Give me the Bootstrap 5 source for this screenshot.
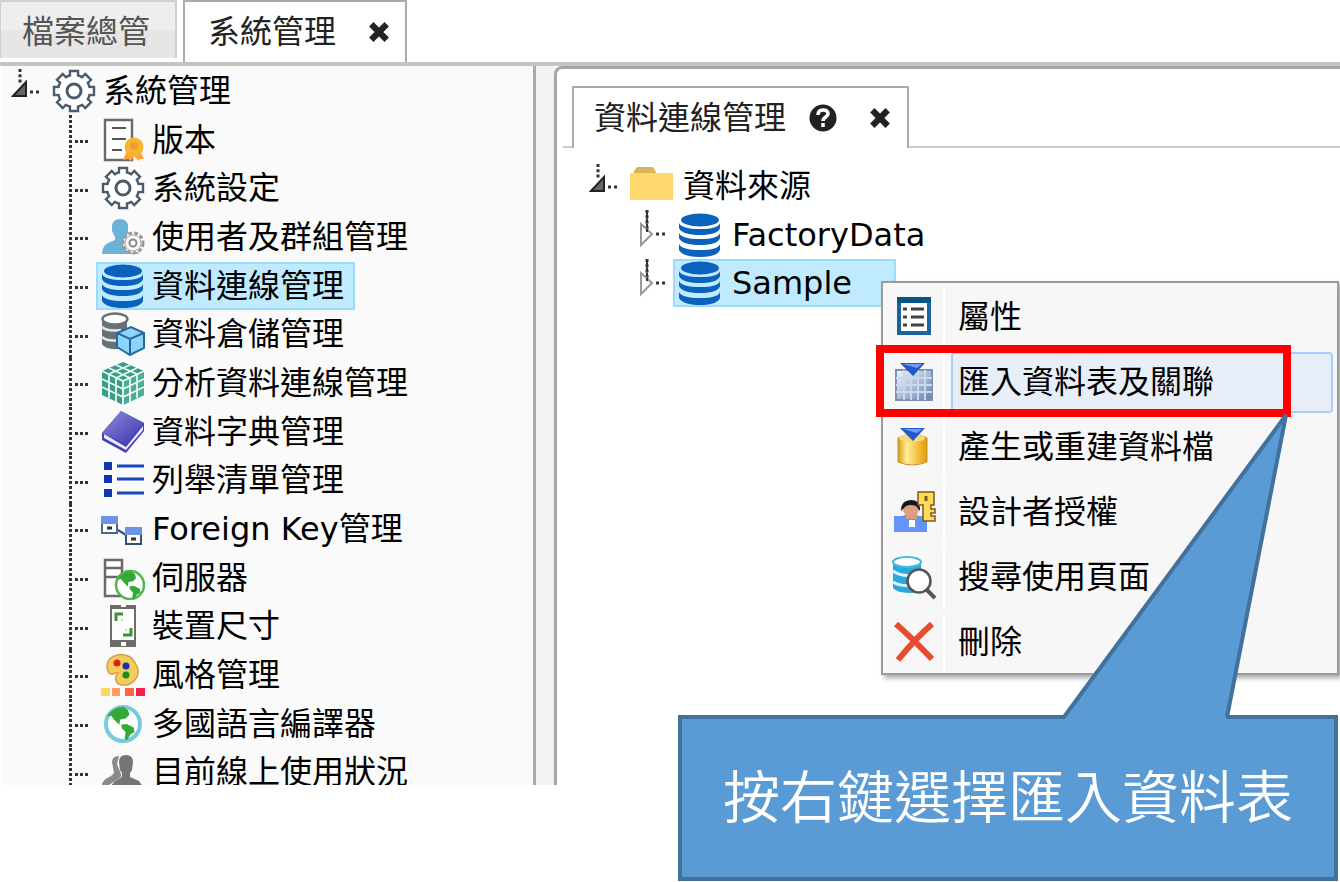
<!DOCTYPE html>
<html lang="zh-Hant">
<head>
<meta charset="utf-8">
<meta name="viewport" content="width=device-width, initial-scale=1">
<title>系統管理</title>
<link href="https://cdn.jsdelivr.net/npm/bootstrap@5.3.0/dist/css/bootstrap.min.css" rel="stylesheet">
<style>
body{font-family:"DejaVu Sans","Noto Sans CJK TC",sans-serif;font-size:32px;line-height:48px;color:#000;background:#fff;overflow:hidden}
a,button{color:inherit;text-decoration:none}
svg{display:block;flex:none}
.app{height:100vh;padding-bottom:97px}
.top-tabs{height:66px;border-bottom:4px solid #c4c4c4;gap:6px}
.top-tab{font-size:32px;line-height:48px;border:2px solid #ababab;border-bottom:0;background:#fff;color:#222;height:62px;padding:0 12px 0 23px;gap:29px}
.top-tab.idle{height:58px;color:#555;border-color:#d0d0d0;border-left:1px solid #d0d0d0;background:linear-gradient(#eee 0 48%,#e6e6e6 52%);padding:4px 25px 0 21px}
.close-x{border:0;background:none;padding:3px}
.side{width:536px;border-left:2px solid #fff;border-right:3px solid #aaa;background:#fafafa;overflow:hidden}
.split{width:18px;background:#f2f2f2}
.content{border:3px solid #a6a6a6;border-right:0;border-bottom:0;border-top-left-radius:8px;background:#fff}
.inner-tabs{padding:17px 0 0 6px}
.inner-tabs::before{content:"";width:9px;border-bottom:2px solid #ccc}
.inner-tabs::after{content:"";flex:1;border-bottom:2px solid #ccc}
.inner-tab{height:62px;border:2px solid #ababab;border-bottom:0;color:#222;padding:0 13px 0 20px}
.help{margin:0 26px 0 20px}
.tree{list-style:none;margin:0;padding:0}
.tree li{height:49px;display:flex;align-items:center;position:relative}
.tree li:nth-child(3n){height:48px}
.node{display:flex;align-items:center;gap:7px;height:48px;border:2px solid transparent;padding:0 9px 0 3px;white-space:nowrap}
.node.active{background:#bfeaff;border-color:#99dcfb}
.node svg{width:44px;height:44px}
.branch{width:94px;height:100%;flex:none;
 background:repeating-linear-gradient(90deg,#333 0 3px,transparent 3px 5px) 73px 25px/14px 3px no-repeat,
 repeating-linear-gradient(#333 0 3px,transparent 3px 5px) 67px 0/3px 100% no-repeat}
.caret-col{width:45px;height:100%;flex:none;padding-left:9px}
.content .caret-col{width:67px;padding-left:32px}
.content .tree{padding-top:13px}
.leaf-col{width:116px;height:100%;flex:none;padding-left:82px}
.content .node{gap:10px}
.sample{padding-right:42px}
.ctx{left:324px;top:22px;width:458px;z-index:2;border:2px solid #9b9b9b;background:#f7f7f7;box-shadow:3px 3px 5px rgba(0,0,0,.35)}
.ctx-item{height:65px;width:100%;border:0;background:none;padding:4px 4px 0 0;display:flex;text-align:left}
.ctx-icon{width:62px;padding-left:9px;border-right:2px solid #fff;display:flex;align-items:center}
.ctx-label{flex:1;margin-left:6px;padding:4px 0 0 5px;border:2px solid transparent;border-radius:4px;color:#000}
.ctx-item.hover .ctx-label{background:#e8eef7;border-color:#a9cdf8}
.frame-red{left:319px;top:86px;width:415px;height:72px;border:8px solid #f00;z-index:3}
.callout{left:121px;top:152px;width:660px;z-index:4}
.callout svg{width:100%;height:470px}
.callout-text{left:0;right:0;bottom:0;height:166px;color:#fff;font:350 57px/156px "Noto Sans CJK TC",sans-serif;text-align:center;white-space:nowrap}
</style>
</head>
<body>
<svg width="0" height="0" class="position-absolute" aria-hidden="true">
<symbol id="gear" viewBox="0 0 44 44">
<g id="teeth" fill="#fff" stroke="#4b5b6b" stroke-width="2.4"><path id="tooth" d="M18 2h8v8h-8z"/><use href="#tooth" transform="rotate(45 22 22)"/><use href="#tooth" transform="rotate(90 22 22)"/><use href="#tooth" transform="rotate(135 22 22)"/><use href="#tooth" transform="rotate(180 22 22)"/><use href="#tooth" transform="rotate(225 22 22)"/><use href="#tooth" transform="rotate(270 22 22)"/><use href="#tooth" transform="rotate(315 22 22)"/><circle cx="22" cy="22" r="16"/></g>
<g fill="#fff"><path id="gap" d="M19.200 4h5.600v7h-5.600z"/><use href="#gap" transform="rotate(45 22 22)"/><use href="#gap" transform="rotate(90 22 22)"/><use href="#gap" transform="rotate(135 22 22)"/><use href="#gap" transform="rotate(180 22 22)"/><use href="#gap" transform="rotate(225 22 22)"/><use href="#gap" transform="rotate(270 22 22)"/><use href="#gap" transform="rotate(315 22 22)"/></g>
<circle cx="22" cy="22" r="7" fill="#fff" stroke="#4b5b6b" stroke-width="3"/></symbol>
<symbol id="db" viewBox="0 0 44 44"><g fill="#0a62bd"><ellipse cx="22" cy="7" rx="19" ry="6.5"/><path d="M1 10q3 6 21 6t20-6v5q-2 7-20 7T1 15zM1 20q3 6 21 6t20-6v5q-2 7-20 7T1 25zM1 31q3 6 21 6t20-6v6q-3 7-20 7T1 37z"/></g></symbol>
<symbol id="xmark" viewBox="0 0 20 20"><path d="M3 3l14 14M17 3L3 17" stroke="#222" stroke-width="5.6"/></symbol>
<symbol id="opened" viewBox="0 0 28 48"><path d="M9 3v14" stroke="#333" stroke-width="3" stroke-dasharray="3 2.3"/><path d="M2 30L15 16v14z" fill="#666" stroke="#222" stroke-width="2"/><path d="M19 26h3m3 0h3" stroke="#333" stroke-width="3"/></symbol>
<symbol id="closed" viewBox="0 0 28 48"><path d="M8 0v24" stroke="#333" stroke-width="3" stroke-dasharray="3 2.3"/><path d="M2 14v21l11-11z" fill="#fff" stroke="#999" stroke-width="2"/><path d="M8 3v20" stroke="#333" stroke-width="2" stroke-dasharray="3 2.3"/><path d="M17 24h3m3 0h3" stroke="#333" stroke-width="3"/></symbol>
<symbol id="land" viewBox="0 0 40 40"><path d="M3 13Q10 2 22 2l5 4 1 5-4 4-6 1-1 6-6-6-3-4zM19 22l6-1 8 4 1 5-5 3-3 6-3-1 1-8-4-4z" fill="#35a935"/></symbol>
</svg>
<div class="app d-flex flex-column">
<header class="top-tabs d-flex align-items-start flex-shrink-0">
<button type="button" class="top-tab idle">檔案總管</button>
<div class="top-tab d-flex align-items-center"><a href="#">系統管理</a><button type="button" class="close-x" aria-label="關閉"><svg width="22" height="22"><use href="#xmark"/></svg></button></div>
</header>
<main class="d-flex flex-fill" style="min-height:0">
<nav class="side flex-shrink-0" aria-label="系統管理">
<ul class="tree">
<li><span class="caret-col"><svg width="28" height="48"><use href="#opened"/></svg></span><a href="#" class="node"><svg><use href="#gear"/></svg>系統管理</a></li>
<li><span class="branch"></span><a href="#" class="node"><svg viewBox="0 0 44 44"><path d="M4 2h27v40H4z" fill="#fff" stroke="#6a6a6a" stroke-width="2.4"/><path d="M11 10h14M11 21h14M11 32h10" stroke="#555" stroke-width="2"/><path d="M26 32l-4 10 5-1 3 2 3-5 5 5 1-2 4 0-5-10z" fill="#ffa23a"/><circle cx="33" cy="29" r="9.5" fill="#f5b52c"/><circle cx="33" cy="28" r="4" fill="#f09a38"/></svg>版本</a></li>
<li><span class="branch"></span><a href="#" class="node"><svg><use href="#gear"/></svg>系統設定</a></li>
<li><span class="branch"></span><a href="#" class="node"><svg viewBox="0 0 44 44"><path d="M11 12q0-8 8-8t8 8v6l-3 6v4l8 4 6 7H1q0-8 6-11l7-3v-3l-3-6z" fill="#6cb2d6"/><circle cx="32" cy="28" r="10" fill="#fff" stroke="#999" stroke-width="3" stroke-dasharray="4 2"/><circle cx="32" cy="28" r="8" fill="#fafafa" stroke="#aaa"/><circle cx="32" cy="28" r="3.5" fill="none" stroke="#888" stroke-width="2"/></svg>使用者及群組管理</a></li>
<li><span class="branch"></span><a href="#" class="node active" aria-current="page"><svg><use href="#db"/></svg>資料連線管理</a></li>
<li><span class="branch"></span><a href="#" class="node"><svg viewBox="0 0 44 44"><path d="M1 7v25q3 6 17 5l8-6V7z" fill="#687276"/><path d="M1 15q6 5 19 3M1 25q6 5 17 3" stroke="#e4e8ea" stroke-width="2.5" fill="none"/><ellipse cx="14" cy="7" rx="12.500" ry="5.500" fill="#fff" stroke="#687276" stroke-width="2.400"/><path d="M16 21l14-6 13 6v15L29 43l-13-8z" fill="#8dd3fb" stroke="#246a9d" stroke-width="2"/><path d="M16 21l13 6 14-6M29 27v16" stroke="#246a9d" stroke-width="2" fill="none"/></svg>資料倉儲管理</a></li>
<li><span class="branch"></span><a href="#" class="node"><svg viewBox="0 0 44 44"><path d="M22 1l21 9v24L22 44 1 34V10z" fill="#3b9c87"/><path d="M22 20l21-10v24L22 44z" fill="#4fab95"/><path d="M1 10l21 10 21-10M22 20v24M8 13v24M15 17v24M29 17v24M36 13v24M8 7l21 10M15 4l21 9M36 7L15 17M29 4L8 13M1 18l21 10 21-10M1 26l21 10 21-10" stroke="#e9fbf5" stroke-width="1.800" fill="none"/></svg>分析資料連線管理</a></li>
<li><span class="branch"></span><a href="#" class="node"><svg viewBox="0 0 44 44"><defs><linearGradient id="bk" x2="1" y2="1"><stop stop-color="#8f8de0"/><stop offset="1" stop-color="#3a32a8"/></linearGradient></defs><path d="M20 1l23 12v8L25 43 1 30v-7z" fill="#4340b8"/><path d="M3 24l22 13 17-21v4L25 40 3 28z" fill="#eceafc"/><path d="M20 1l23 12-18 21L1 23z" fill="url(#bk)"/></svg>資料字典管理</a></li>
<li><span class="branch"></span><a href="#" class="node"><svg viewBox="0 0 44 44"><path d="M3 4h8v8H3zM3 17h8v8H3zM3 31h8v8H3z" fill="#0d36b0"/><path d="M16 8h27M16 21h27M16 35h27" stroke="#1748bd" stroke-width="3.200"/></svg>列舉清單管理</a></li>
<li><span class="branch"></span><a href="#" class="node"><svg viewBox="0 0 44 44"><path d="M15 22l12 7" stroke="#345c87" stroke-width="2.500"/><path d="M1 10h15v16H1z" fill="#fff" stroke="#49698e" stroke-width="2"/><path d="M0 9h17v8H0z" fill="#6c94e5"/><path d="M25 21h15v16H25z" fill="#fff" stroke="#344f70" stroke-width="2"/><path d="M24 20h17v8H24z" fill="#6c94e5"/><path d="M6 21h5M30 32h5" stroke="#334" stroke-width="3"/></svg>Foreign Key管理</a></li>
<li><span class="branch"></span><a href="#" class="node"><svg viewBox="0 0 44 44"><path d="M4 4h17v36H4zM4 12h17M4 21h17" fill="#fff" stroke="#6a6a6a" stroke-width="2.500"/><circle cx="29" cy="29" r="14" fill="#fff" stroke="#4fb84f" stroke-width="2.500"/><use href="#land" x="14" y="14" width="30" height="30"/></svg>伺服器</a></li>
<li><span class="branch"></span><a href="#" class="node"><svg viewBox="0 0 44 44"><path d="M9 1h26v42H9z" fill="#6c6c6c"/><path d="M11 5h22v31H11zM20 1h5v2h-5zM20 38h5v4h-5z" fill="#fff"/><path d="M15 17v-7h7M30 24v7h-8" stroke="#3b9336" stroke-width="3" fill="none"/><path d="M20 15l2 2M24 25l2 2" stroke="#83bd7f" stroke-width="1"/></svg>裝置尺寸</a></li>
<li><span class="branch"></span><a href="#" class="node"><svg viewBox="0 0 44 44"><path d="M6 15C5 4 17-1 27 3c7 3 8 9 10 13 1 9-6 17-15 16-8 0-9-8-5-12-3-1-6 3-9 0z" fill="#f3cc5c" stroke="#d2a146" stroke-width="1.500"/><circle cx="16" cy="10" r="3.500" fill="#e02010"/><circle cx="25" cy="13" r="3.500" fill="#1235b8"/><circle cx="25" cy="22" r="3.500" fill="#169116"/><path d="M0 35h9v8H0z" fill="#ffd65e"/><path d="M11 35h8v8h-8z" fill="#ff9c66"/><path d="M24 35h9v8h-9z" fill="#ff6547"/><path d="M35 35h9v8h-9z" fill="#f92149"/></svg>風格管理</a></li>
<li><span class="branch"></span><a href="#" class="node"><svg viewBox="0 0 44 44"><circle cx="22" cy="22" r="17" fill="#fff" stroke="#75cce1" stroke-width="4"/><use href="#land" x="3" y="3" width="36" height="36"/></svg>多國語言編譯器</a></li>
<li><span class="branch"></span><a href="#" class="node"><svg viewBox="0 0 44 44"><path d="M11 12q0-6 7-6l-2 8 4 10 0 3-12 8H1q0-5 9-9l3-3z" fill="#8a8a8a"/><path d="M18 12q0-7 7-7t7 7l-1 8-2 3v4l9 4 4 6v7H9v-7l5-6 7-4v-4l-2-3z" fill="#757575"/></svg>目前線上使用狀況</a></li>
</ul>
</nav>
<div class="split flex-shrink-0"></div>
<section class="content flex-fill">
<div class="inner-tabs d-flex"><div class="inner-tab d-flex align-items-center"><a href="#">資料連線管理</a><button type="button" class="close-x help" aria-label="說明"><svg viewBox="0 0 28 28" width="28" height="28"><circle cx="14" cy="14" r="13.500" fill="#222"/><path d="M9 11q0-5 5-5t5 4c0 3-5 3-5 7M14 19v4" stroke="#fff" stroke-width="3.500" fill="none"/></svg></button><button type="button" class="close-x" aria-label="關閉"><svg width="22" height="22"><use href="#xmark"/></svg></button></div></div>
<ul class="tree">
<li><span class="caret-col"><svg width="28" height="48"><use href="#opened"/></svg></span><a href="#" class="node"><svg viewBox="0 0 44 44"><path d="M5 7l3-4h16l3 5v4H5z" fill="#d9b457"/><path d="M1 9h43v27H1z" fill="#ffd970"/></svg>資料來源</a></li>
<li><span class="leaf-col"><svg width="28" height="48"><use href="#closed"/></svg></span><a href="#" class="node"><svg><use href="#db"/></svg>FactoryData</a></li>
<li><span class="leaf-col"><svg width="28" height="48"><use href="#closed"/></svg></span><a href="#" class="node active sample"><svg><use href="#db"/></svg>Sample</a>
<div class="ctx position-absolute" role="menu">
<button type="button" class="ctx-item" role="menuitem"><span class="ctx-icon"><svg viewBox="0 0 44 44" width="44" height="44"><path d="M7 4h30v33H7z" fill="#fff" stroke="#1c6597" stroke-width="4"/><path d="M5 1h34v6H5z" fill="#075585"/><path d="M11 13h4m4 0h13M11 21h4m4 0h13M11 29h4m4 0h13" stroke="#444" stroke-width="3"/></svg></span><span class="ctx-label">屬性</span></button>
<button type="button" class="ctx-item hover" role="menuitem"><span class="ctx-icon"><svg viewBox="0 0 44 44" width="44" height="44"><defs><linearGradient id="tb" x2="1" y2="1"><stop stop-color="#f3f8ff"/><stop offset="1" stop-color="#6982ad"/></linearGradient></defs><path d="M4 9h36v30H4z" fill="url(#tb)" stroke="#7c90b5" stroke-width="2"/><path d="M4 17h36M4 24h36M4 31h36M12 9v30M19 9v30M26 9v30M33 9v30" stroke="#cad8ef" stroke-width="2"/><path d="M8 2h25L21 15z" fill="#2459c9"/><path d="M11 3h19l-5 4z" fill="#729cf0"/></svg></span><span class="ctx-label">匯入資料表及關聯</span></button>
<button type="button" class="ctx-item" role="menuitem"><span class="ctx-icon"><svg viewBox="0 0 44 44" width="44" height="44"><defs><linearGradient id="gd"><stop stop-color="#d99c12"/><stop offset=".3" stop-color="#ffef94"/><stop offset="1" stop-color="#e69a00"/></linearGradient></defs><path d="M6 12v24q14 6 29 0V12q-14-8-29 0z" fill="url(#gd)" stroke="#c19236"/><ellipse cx="20" cy="12" rx="13" ry="4" fill="#f6dc79"/><path d="M8 2h25L21 15z" fill="#2459c9"/><path d="M11 3h19l-5 4z" fill="#729cf0"/></svg></span><span class="ctx-label">產生或重建資料檔</span></button>
<button type="button" class="ctx-item" role="menuitem"><span class="ctx-icon"><svg viewBox="0 0 44 44" width="44" height="44"><path d="M2 25h8l9-3 8 3h8v16H2z" fill="#6294fb"/><path d="M14 18h11v10H14z" fill="#d99b7b"/><circle cx="19" cy="18" r="8" fill="#dba083"/><path d="M9 20q0-11 10-11t9 11l-4-5q-6-2-10 0z" fill="#161616"/><path d="M17 29h6v7h-6z" fill="#fff"/><path d="M26 1h16v13h-3v4h4v4h-4v3h4v5H31V14h-5z" fill="#ffda53" stroke="#795a20" stroke-width="1.500"/><path d="M34 5v5" stroke="#795a20" stroke-width="3"/></svg></span><span class="ctx-label">設計者授權</span></button>
<button type="button" class="ctx-item" role="menuitem"><span class="ctx-icon"><svg viewBox="0 0 44 44" width="44" height="44"><path d="M1 6v26q6 7 28 4V6z" fill="#28a9dd"/><path d="M1 15q8 6 22 4M1 26q8 5 20 3" stroke="#e2f6ff" stroke-width="3" fill="none"/><ellipse cx="15" cy="6" rx="14" ry="5" fill="#fff" stroke="#42badf" stroke-width="2"/><circle cx="27" cy="25" r="11.500" fill="#fff" stroke="#555" stroke-width="2.500"/><path d="M35 34l8 8" stroke="#555" stroke-width="4"/></svg></span><span class="ctx-label">搜尋使用頁面</span></button>
<button type="button" class="ctx-item" role="menuitem"><span class="ctx-icon"><svg viewBox="0 0 44 44" width="44" height="44"><path d="M4 3q15 13 36 35M40 3Q22 19 6 39" stroke="#e94b30" stroke-width="6" fill="none"/></svg></span><span class="ctx-label">刪除</span></button>
</div>
<div class="frame-red position-absolute pe-none"></div>
<div class="callout position-absolute pe-none"><svg viewBox="0 0 660 470" preserveAspectRatio="none"><path d="M2 306H386L608 4 549 306H658V468H2z" fill="#5b9bd5"/><path d="M386 306L608 4 549 306" fill="none" stroke="#41719c" stroke-width="4" stroke-linejoin="bevel"/><path d="M387 306H2V468H658V306H548" fill="none" stroke="#41719c" stroke-width="4"/></svg><div class="callout-text position-absolute">按右鍵選擇匯入資料表</div></div>
</li>
</ul>
</section>
</main>
</div>
<script src="https://cdn.jsdelivr.net/npm/bootstrap@5.3.0/dist/js/bootstrap.bundle.min.js"></script>
</body>
</html>
